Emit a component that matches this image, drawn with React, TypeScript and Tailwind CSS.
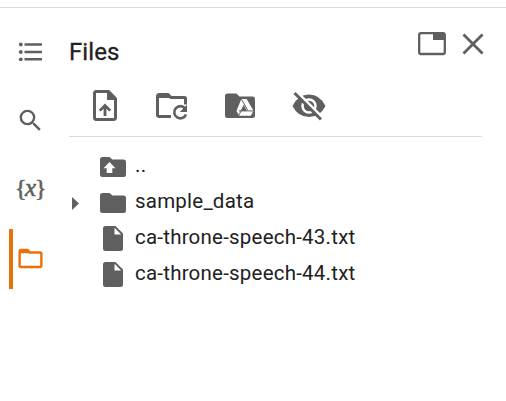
import type { ReactNode } from 'react';

const ink = '#5f5f5f';

function Rail() {
  return (
    <nav className="flex w-[69px] shrink-0 flex-col">
      <button className="flex h-[88px] items-center pl-[18px]" aria-label="Table of contents">
        <svg width="25" height="20" viewBox="0 0 25 20" fill={ink}>
          <circle cx="2.8" cy="2.5" r="1.9" />
          <circle cx="2.8" cy="10" r="1.9" />
          <circle cx="2.8" cy="17.3" r="1.9" />
          <path d="M6.5 1.3H24v2.4H6.5zM6.5 8.8H24v2.4H6.5zM6.5 16.1H24v2.4H6.5z" />
        </svg>
      </button>
      <button className="flex h-[50px] items-center pb-px pl-4" aria-label="Search">
        <svg width="29" height="29" viewBox="0 0 24 24" fill={ink}>
          <path d="M15.5 14h-.79l-.28-.27A6.471 6.471 0 0 0 16 9.5 6.5 6.5 0 1 0 9.5 16c1.61 0 3.09-.59 4.23-1.57l.27.28v.79l5 4.99L20.49 19l-4.99-5zm-6 0C7.01 14 5 11.99 5 9.5S7.01 5 9.5 5 14 7.01 14 9.5 11.99 14 9.5 14z" />
        </svg>
      </button>
      <button className="flex h-[83px] items-center pl-4 font-['Liberation_Serif',serif] text-[24px] leading-none text-[#5f5f5f] [-webkit-text-stroke:0.6px_#5f5f5f]" aria-label="Variables">
        <span className="w-[29px] whitespace-nowrap">
          <span className="inline-block w-[9px] -indent-px">{'{'}</span>
          <i className="inline-block w-[11px] text-[25px] leading-6">x</i>
          <span className="inline-block w-[9px] -indent-px">{'}'}</span>
        </span>
      </button>
      <button className="ml-[9px] flex h-[60px] items-center border-l-4 border-[#e8710a] pb-px pl-[3px]" aria-label="Files">
        <svg width="29" height="29" viewBox="0 0 24 24" fill="#e8710a">
          <path d="M9.17 6l2 2H20v10H4V6h5.17M10 4H4c-1.1 0-1.99.9-1.99 2L2 18c0 1.1.9 2 2 2h16c1.1 0 2-.9 2-2V8c0-1.1-.9-2-2-2h-8l-2-2z" />
          <path d="M3 5h7l2 2.6H3z" />
        </svg>
      </button>
    </nav>
  );
}

function Toolbar() {
  return (
    <div className="flex h-[61px] w-[413px] border-b border-[#dadada] pt-[14px] pl-[24px]">
      <svg width="24" height="32" viewBox="0 0 24 32">
        <path d="M3 1.5h12.5L22.5 8.5V28a1.5 1.5 0 0 1-1.5 1.5H3A1.5 1.5 0 0 1 1.5 28V3A1.5 1.5 0 0 1 3 1.5z" fill="none" stroke={ink} strokeWidth="3" />
        <path d="M14 1l9 9h-9zM12 13.5l-6.2 6.2 1.9 1.9 2.9-2.9V26h2.8v-7.3l2.9 2.9 1.9-1.9z" fill={ink} />
      </svg>
      <svg className="ml-[39px]" width="32" height="32" viewBox="0 0 32 32">
        <path d="M15 26.5H3A1.5 1.5 0 0 1 1.5 25V6A1.5 1.5 0 0 1 3 4.5h9l3 3h13.5a1 1 0 0 1 1 1v6" fill="none" stroke={ink} strokeWidth="3" />
        <path d="M2 4h10l4 4H2z" fill={ink} />
        <path d="M29 18.3a6.1 6.1 0 1 0 1 6.3" fill="none" stroke={ink} strokeWidth="2.6" />
        <path d="M31 14.8V22h-7.2z" fill={ink} />
      </svg>
      <svg className="ml-[37px]" width="30" height="32" viewBox="0 0 30 32">
        <path d="M2.5 3.5h9l3 3h13A2.5 2.5 0 0 1 30 9v16.5a2.5 2.5 0 0 1-2.5 2.5h-25A2.5 2.5 0 0 1 0 25.5V6a2.5 2.5 0 0 1 2.5-2.5z" fill={ink} />
        <path d="M16.3 9h5.4l6.8 11.7-2.7 5.1H14.2l-2.7-4.9z" fill="white" />
        <path d="M16.3 9l6.3 11M13.8 20.9h14.7M19.5 14.3l-5.7 11" fill="none" stroke={ink} strokeWidth="1" />
        <path d="M19 15.5l3 5.4h-6z" fill={ink} />
      </svg>
      <svg className="ml-[37px]" width="34" height="32" viewBox="0 0 34 32">
        <path d="M.5 16Q6 4.5 17 4.5T33.5 16Q28 27 17 27T.5 16z" fill={ink} />
        <circle cx="17" cy="16" r="6.5" fill={ink} stroke="white" strokeWidth="2.5" />
        <circle cx="17" cy="16" r="3.7" fill={ink} />
        <path d="M4.5 1.5l27 27" stroke="white" strokeWidth="2.5" />
        <path d="M2.5 3l26.5 26.5" stroke={ink} strokeWidth="3" />
      </svg>
    </div>
  );
}

const folder = 'M2.5 0h7l3 2.6h11A2.5 2.5 0 0 1 26 5.1v12.4a2.5 2.5 0 0 1-2.5 2.5h-21A2.5 2.5 0 0 1 0 17.5v-15A2.5 2.5 0 0 1 2.5 0z';

function FolderIcon({ up = false }: { up?: boolean }) {
  return (
    <svg className="shrink-0" width="26" height="20" viewBox="0 0 26 20">
      <path d={folder} fill={ink} />
      {up && <path d="M9.5 5l6 6.2h-3.2V16H6.7v-4.8H3.5z" fill="white" />}
    </svg>
  );
}

function FileIcon() {
  return (
    <svg className="mx-[3px] shrink-0" width="20" height="26" viewBox="0 0 20 26">
      <path d="M2.5 0h10L20 7.5v15a2.5 2.5 0 0 1-2.5 2.5h-15A2.5 2.5 0 0 1 0 22.5v-20A2.5 2.5 0 0 1 2.5 0z" fill={ink} />
      <path d="M11.5 1.8v6.8h6.7z" fill="white" />
    </svg>
  );
}

function Row({ icon, label, caret = false }: { icon: ReactNode; label: string; caret?: boolean }) {
  return (
    <li className="flex h-9 items-center">
      <span className="w-[31px] pl-[3px]">
        {caret && <svg width="7" height="13" viewBox="0 0 7 13"><path d="M0 0l7 6.5L0 13z" fill={ink} /></svg>}
      </span>
      {icon}
      <span className="-mt-[5px] ml-[9px] text-[20.5px] leading-6 tracking-[0.22px] whitespace-nowrap">{label}</span>
    </li>
  );
}

export default function App() {
  return (
    <div className="h-[401px] w-[506px] overflow-hidden bg-white pt-[7px] font-['Roboto',sans-serif] text-[#212121]">
      <div className="flex border-t border-[#dadada]">
        <Rail />
        <main className="min-w-0 flex-1">
          <header className="flex h-[68px]">
            <h1 className="mt-[30px] w-[349px] text-[24px] leading-7 tracking-[0.1px] [-webkit-text-stroke:0.3px_#212121]">Files</h1>
            <svg className="mt-6" width="28" height="24" viewBox="0 0 28 24">
              <rect x="1.2" y="1.2" width="25.6" height="20.8" rx="1.8" fill="none" stroke={ink} strokeWidth="2.3" />
              <path d="M15 1h12v7H15z" fill={ink} />
            </svg>
            <svg className="mt-[25px] ml-4" width="22" height="22" viewBox="0 0 22 22">
              <path d="M1.5 1.5l19 19M20.5 1.5l-19 19" stroke={ink} strokeWidth="2.8" />
            </svg>
          </header>
          <Toolbar />
          <ul className="pt-3">
            <Row icon={<FolderIcon up />} label=".." />
            <Row icon={<FolderIcon />} label="sample_data" caret />
            <Row icon={<FileIcon />} label="ca-throne-speech-43.txt" />
            <Row icon={<FileIcon />} label="ca-throne-speech-44.txt" />
          </ul>
        </main>
      </div>
    </div>
  );
}
